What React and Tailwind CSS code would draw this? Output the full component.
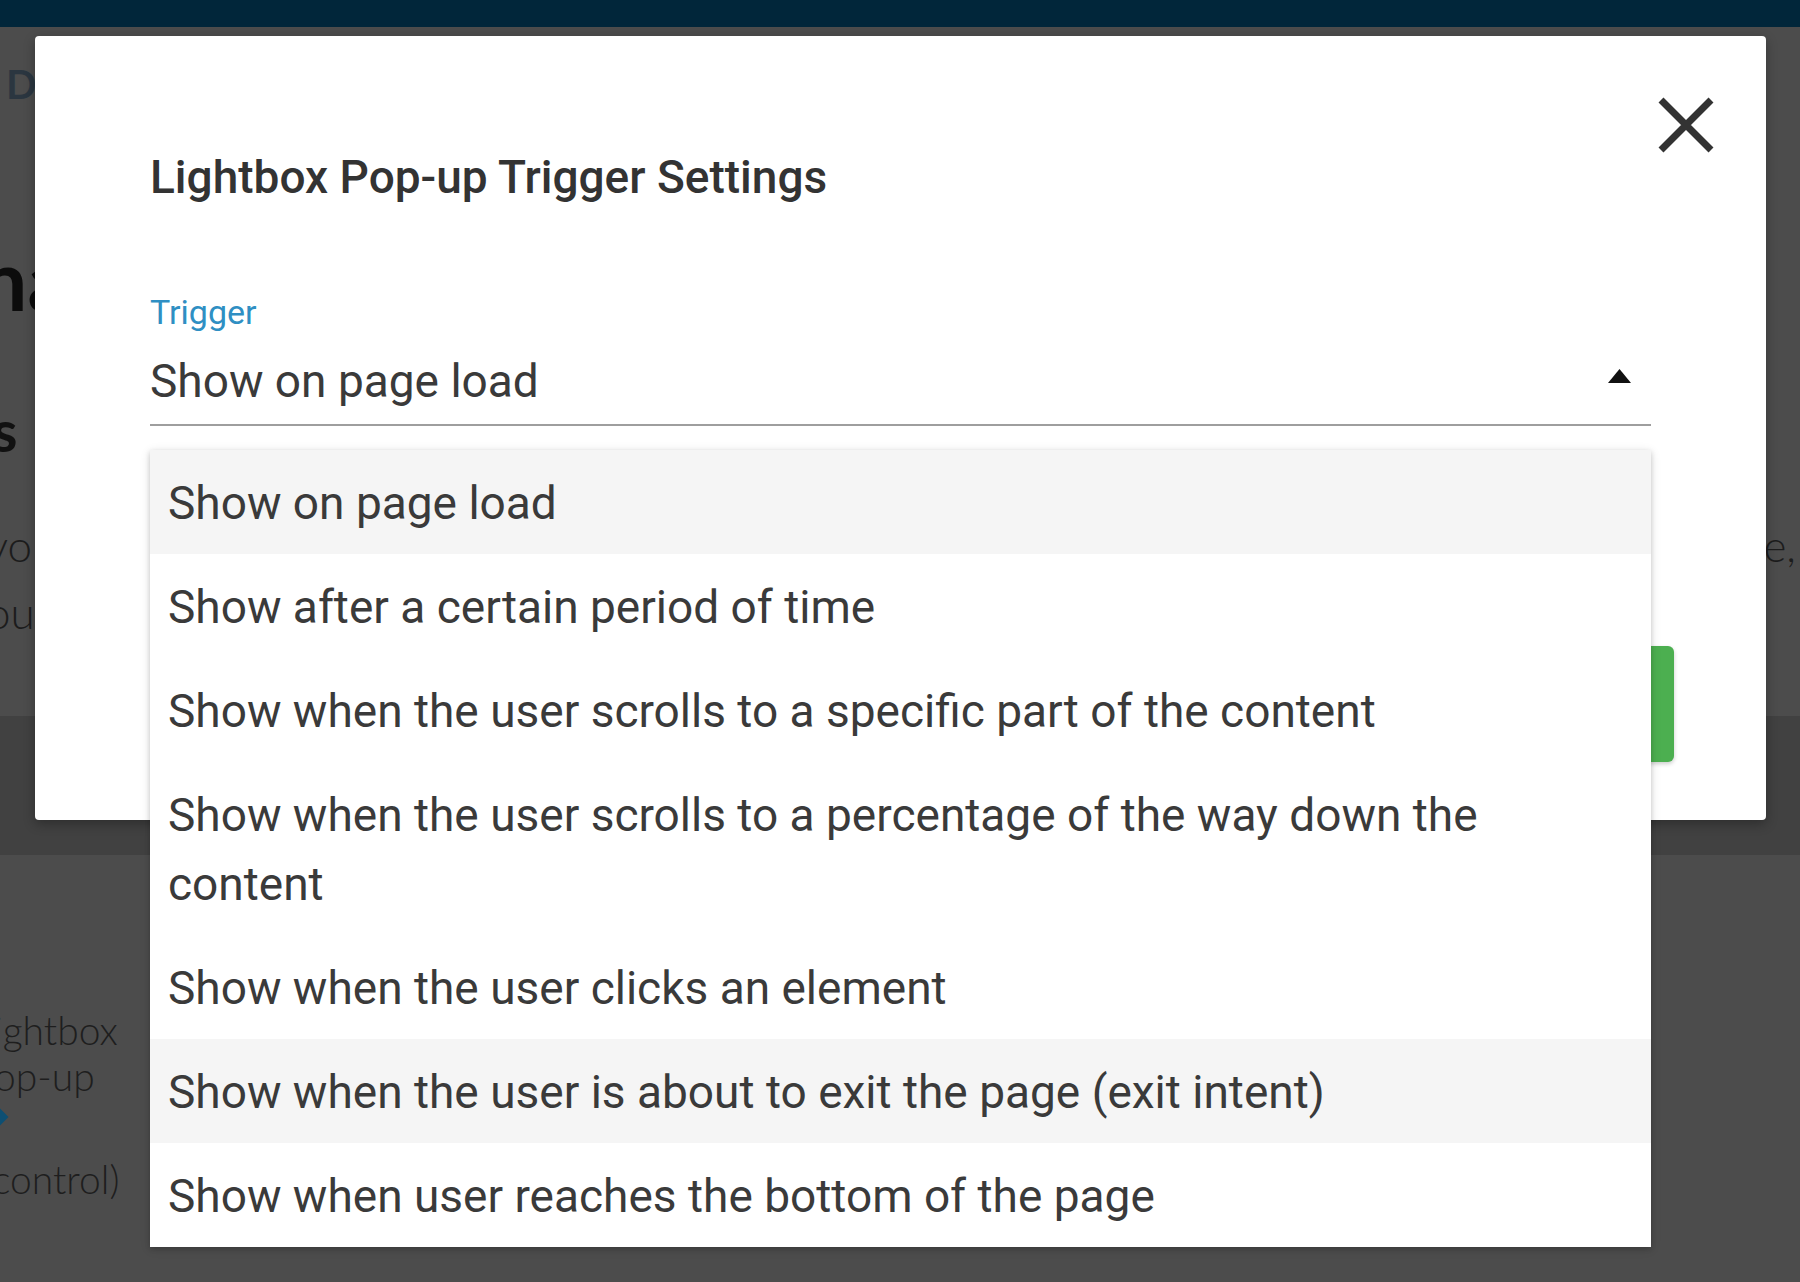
const options = [
  'Show on page load',
  'Show after a certain period of time',
  'Show when the user scrolls to a specific part of the content',
  'Show when the user scrolls to a percentage of the way down the content',
  'Show when the user clicks an element',
  'Show when the user is about to exit the page (exit intent)',
  'Show when user reaches the bottom of the page',
]

const highlighted = [0, 5]

function CloseIcon() {
  return (
    <svg viewBox="0 0 58 58" className="h-[58px] w-[58px]">
      <path d="M4 4 L54 54 M54 4 L4 54" stroke="#333" strokeWidth="7" fill="none" />
    </svg>
  )
}

function Caret() {
  return (
    <svg viewBox="0 0 23 14" className="h-[14px] w-[23px]">
      <path d="M0 14 L11.5 0 L23 14 Z" fill="#111" />
    </svg>
  )
}

function BackgroundPage() {
  return (
    <div className="font-['Lato',sans-serif]">
      <div className="h-[27px] bg-[#01263a]" />

      <div className="h-[689px] pl-[6px]">
        <div className="pt-[37px] text-[40px] font-bold leading-[40px] text-[#2b3640]">Da</div>
        <div className="ml-[-26px] mt-[133px] text-[84px] font-bold leading-[84px] text-[#0c0c0c]">na</div>
        <div className="ml-[-14px] mt-[80px] text-[58px] font-bold leading-[58px] text-[#111]">s</div>
        <div className="mt-[53px] flex justify-between pr-[4px] text-[44px] font-light leading-[67px] text-[#1c1c1c]">
          <div className="ml-[-20px]">
            yo
            <br />
            ou
          </div>
          <div>e,</div>
        </div>
      </div>

      <div className="h-[139px] bg-[#414141]" />

      <div className="pt-[152px] text-[39px] font-light leading-[46px] text-[#1e1e1e]">
        <div className="ml-[-6px]">ightbox</div>
        <div className="ml-[-6px]">op-up</div>
        <div className="h-[57px] pt-[12px]">
          <div className="ml-[-6px] h-[12px] w-[12px] rotate-45 bg-[#0d4f73]" />
        </div>
        <div className="ml-[-8px]">control)</div>
      </div>
    </div>
  )
}

function TriggerSelect() {
  return (
    <div className="relative mt-[87px]">
      <div className="text-[34px] leading-[1.2] text-[#2f8fc3]">Trigger</div>
      <div className="mt-[14px] flex items-center justify-between border-b-2 border-[#9e9e9e] pb-[8px]">
        <span className="text-[46px] leading-[69px] text-[#3a3a3a]">Show on page load</span>
        <span className="mb-[10px] mr-[20px] flex">
          <Caret />
        </span>
      </div>

      <ul className="absolute left-0 right-0 top-[158px] z-10 bg-white shadow-[0_2px_5px_0_rgba(0,0,0,0.16),0_2px_10px_0_rgba(0,0,0,0.12)]">
        {options.map((opt, i) => (
          <li
            key={opt}
            className={
              highlighted.includes(i)
                ? 'bg-[#f5f5f5] px-[18px] pb-[16.5px] pt-[18.5px] text-[46px] leading-[69px] text-[#3a3a3a]'
                : 'bg-white px-[18px] pb-[16.5px] pt-[18.5px] text-[46px] leading-[69px] text-[#3a3a3a]'
            }
          >
            {opt}
          </li>
        ))}
      </ul>
    </div>
  )
}

export default function App() {
  return (
    <div className="relative h-[1282px] w-[1800px] overflow-hidden bg-[#4c4c4c]">
      <BackgroundPage />

      <div className="absolute left-[35px] top-[36px] h-[784px] w-[1731px] rounded-[4px] bg-white font-['Roboto',sans-serif] shadow-[0_4px_12px_rgba(0,0,0,0.3)]">
        <button className="absolute right-[51px] top-[60px] flex">
          <CloseIcon />
        </button>

        <div className="px-[115px] pt-[114px]">
          <h2 className="text-[46px] font-medium leading-[1.2] text-[#333]">
            Lightbox Pop-up Trigger Settings
          </h2>

          <TriggerSelect />

          <div className="mr-[-23px] mt-[220px] flex justify-end">
            <button className="h-[116px] w-[300px] rounded-[6px] bg-[#4caf50] text-[40px] font-medium text-white shadow-[0_2px_4px_rgba(0,0,0,0.2)]">
              Save
            </button>
          </div>
        </div>
      </div>
    </div>
  )
}
